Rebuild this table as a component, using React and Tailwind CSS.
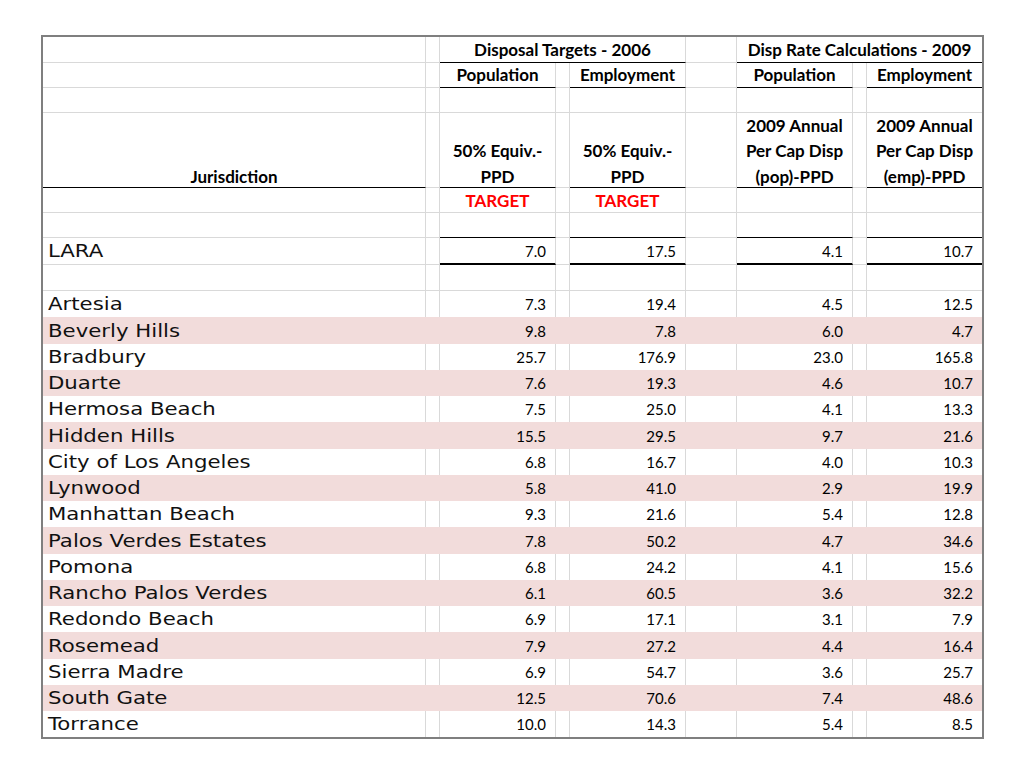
import React from 'react';

const cols = 'grid grid-rows-1 grid-cols-[383px_14px_116px_14px_116px_51px_116px_14px_115px]';

// bottom edge styles
const bottom = {
  g: 'border-b border-b-[#d9d9d9]',
  k: 'border-b border-b-black',
  K: 'border-b-2 border-b-black',
  n: '',
};

const numFont = "font-['Lato','Liberation_Sans',sans-serif]";
const nameFont = "font-['DejaVu_Sans','Verdana',sans-serif]";

function Cell({ b = 'g', last, span3, pink, className = '', children }) {
  const right = last ? '' : pink ? 'border-r border-r-transparent' : 'border-r border-r-[#d9d9d9]';
  return (
    <div className={`min-h-0 ${right} ${pink ? '' : bottom[b]} ${span3 ? 'col-span-3' : ''} ${className}`}>
      {children}
    </div>
  );
}

const rows = [
  ['Artesia', '7.3', '19.4', '4.5', '12.5'],
  ['Beverly Hills', '9.8', '7.8', '6.0', '4.7'],
  ['Bradbury', '25.7', '176.9', '23.0', '165.8'],
  ['Duarte', '7.6', '19.3', '4.6', '10.7'],
  ['Hermosa Beach', '7.5', '25.0', '4.1', '13.3'],
  ['Hidden Hills', '15.5', '29.5', '9.7', '21.6'],
  ['City of Los Angeles', '6.8', '16.7', '4.0', '10.3'],
  ['Lynwood', '5.8', '41.0', '2.9', '19.9'],
  ['Manhattan Beach', '9.3', '21.6', '5.4', '12.8'],
  ['Palos Verdes Estates', '7.8', '50.2', '4.7', '34.6'],
  ['Pomona', '6.8', '24.2', '4.1', '15.6'],
  ['Rancho Palos Verdes', '6.1', '60.5', '3.6', '32.2'],
  ['Redondo Beach', '6.9', '17.1', '3.1', '7.9'],
  ['Rosemead', '7.9', '27.2', '4.4', '16.4'],
  ['Sierra Madre', '6.9', '54.7', '3.6', '25.7'],
  ['South Gate', '12.5', '70.6', '7.4', '48.6'],
  ['Torrance', '10.0', '14.3', '5.4', '8.5'],
];

const hd = `${numFont} font-bold text-[17px] text-black flex items-center justify-center`;
const num = `${numFont} text-[15px] text-black flex items-center justify-end pr-[9px] pt-[1px]`;
const name = `${nameFont} text-[17px] text-[#111] flex items-center pl-[5px] pt-[2px] whitespace-nowrap`;
const stack = `${numFont} font-bold text-[17px] text-black flex flex-col items-center justify-end leading-[25.5px]`;

// the names in the sheet are set in a wide face; stretch DejaVu to match
function Name({ children }) {
  return <span className="inline-block origin-left scale-x-[1.25]">{children}</span>;
}

function Stack({ lines }) {
  return (
    <div className="flex flex-col items-center mb-[-2px]">
      {lines.map((l) => (
        <span key={l}>{l}</span>
      ))}
    </div>
  );
}

function Blank() {
  return (
    <div className={`${cols} h-[25px]`}>
      {Array.from({ length: 9 }).map((_, i) => (
        <Cell key={i} last={i === 8} />
      ))}
    </div>
  );
}

export default function App() {
  return (
    <div className="min-h-[768px] w-[1024px] bg-white pt-[35px] pl-[41px]">
      <div className="w-[943px] border-2 border-[#7f7f7f]">
        {/* row 1: group titles */}
        <div className={`${cols} h-[26px]`}>
          <Cell />
          <Cell />
          <Cell span3 b="k" className={hd}>Disposal Targets - 2006</Cell>
          <Cell />
          <Cell span3 b="k" last className={hd}>Disp Rate Calculations - 2009</Cell>
        </div>

        {/* row 2: sub titles */}
        <div className={`${cols} h-[25px]`}>
          <Cell />
          <Cell />
          <Cell b="k" className={hd}>Population</Cell>
          <Cell />
          <Cell b="k" className={hd}>Employment</Cell>
          <Cell />
          <Cell b="k" className={hd}>Population</Cell>
          <Cell />
          <Cell b="k" last className={hd}>Employment</Cell>
        </div>

        <Blank />

        {/* row 4: column captions */}
        <div className={`${cols} h-[75px]`}>
          <Cell b="k" className={stack}>
            <Stack lines={['Jurisdiction']} />
          </Cell>
          <Cell />
          <Cell b="k" className={stack}>
            <Stack lines={['50% Equiv.-', 'PPD']} />
          </Cell>
          <Cell />
          <Cell b="k" className={stack}>
            <Stack lines={['50% Equiv.-', 'PPD']} />
          </Cell>
          <Cell />
          <Cell b="k" className={stack}>
            <Stack lines={['2009 Annual', 'Per Cap Disp', '(pop)-PPD']} />
          </Cell>
          <Cell />
          <Cell b="k" last className={stack}>
            <Stack lines={['2009 Annual', 'Per Cap Disp', '(emp)-PPD']} />
          </Cell>
        </div>

        {/* row 5: target markers */}
        <div className={`${cols} h-[25px]`}>
          <Cell />
          <Cell />
          <Cell className={`${hd} !text-[#ff0000] pt-[1px]`}>TARGET</Cell>
          <Cell />
          <Cell className={`${hd} !text-[#ff0000] pt-[1px]`}>TARGET</Cell>
          <Cell />
          <Cell />
          <Cell />
          <Cell last />
        </div>

        {/* row 6: blank, black rule above LARA */}
        <div className={`${cols} h-[25px]`}>
          <Cell />
          <Cell />
          <Cell b="k" />
          <Cell />
          <Cell b="k" />
          <Cell />
          <Cell b="k" />
          <Cell />
          <Cell b="k" last />
        </div>

        {/* row 7: LARA */}
        <div className={`${cols} h-[27px]`}>
          <Cell className={name}><Name>LARA</Name></Cell>
          <Cell />
          <Cell b="K" className={num}>7.0</Cell>
          <Cell />
          <Cell b="K" className={num}>17.5</Cell>
          <Cell />
          <Cell b="K" className={num}>4.1</Cell>
          <Cell />
          <Cell b="K" last className={num}>10.7</Cell>
        </div>

        {/* row 8: blank */}
        <div className={`${cols} h-[26px]`}>
          {Array.from({ length: 9 }).map((_, i) => (
            <Cell key={i} last={i === 8} />
          ))}
        </div>

        {/* data rows */}
        {rows.map((r, i) => {
          const pink = i % 2 === 1;
          return (
            <div key={r[0]} className={`${cols} h-[26.25px] ${pink ? 'bg-[#f2dcdb]' : 'bg-white'}`}>
              <Cell pink={pink} b="n" className={name}><Name>{r[0]}</Name></Cell>
              <Cell pink={pink} b="n" />
              <Cell pink={pink} b="n" className={num}>{r[1]}</Cell>
              <Cell pink={pink} b="n" />
              <Cell pink={pink} b="n" className={num}>{r[2]}</Cell>
              <Cell pink={pink} b="n" />
              <Cell pink={pink} b="n" className={num}>{r[3]}</Cell>
              <Cell pink={pink} b="n" />
              <Cell pink={pink} b="n" last className={num}>{r[4]}</Cell>
            </div>
          );
        })}
      </div>
    </div>
  );
}
